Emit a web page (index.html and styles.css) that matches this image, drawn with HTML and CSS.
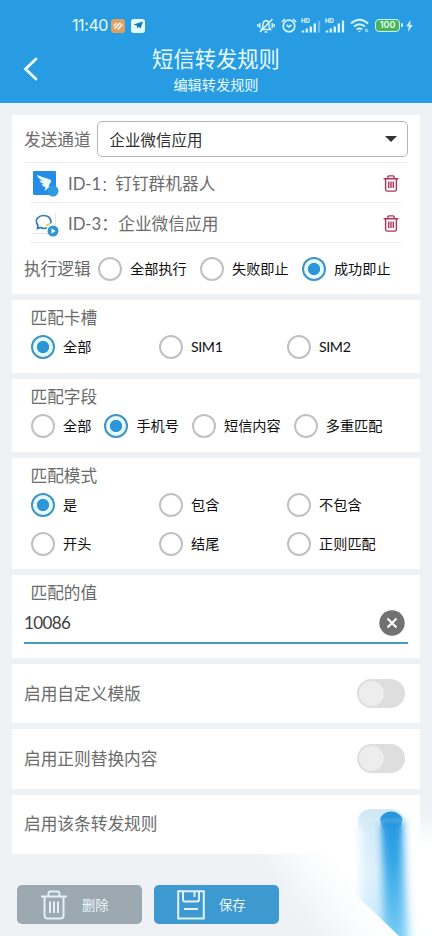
FILE: index.html
```html
<!DOCTYPE html>
<html lang="zh-CN">
<head>
<meta charset="utf-8">
<title>短信转发规则</title>
<link rel="stylesheet" href="styles.css">
</head>
<body>
<svg class="defs" width="0" height="0">
  <symbol id="trash" viewBox="0 0 28 30">
    <path d="M1 6.500H27M8.500 6V3.500Q8.500 1.500 10.500 1.500H17.500Q19.500 1.500 19.500 3.500V6M4.500 7V25.500Q4.500 28.500 7.500 28.500H20.500Q23.500 28.500 23.500 25.500V7M10 11.500V23M14 11.500V23M18 11.500V23"/>
  </symbol>
  <symbol id="signal" viewBox="0 0 20 15">
    <path d="M2 14.500v-2M5.800 14.500v-4M9.800 14.500v-6M13.800 14.500v-9" fill="none" stroke="#d5f4fc" stroke-width="2.400"/>
  </symbol>
</svg>
<main class="screen">
  <header class="top">
    <div class="status">
      <span class="clock">11:40</span>
      <svg class="app" width="14" height="14" viewBox="0 0 14 14"><rect width="14" height="14" rx="3" fill="#dfa064"/><path d="M2.500 7L5.500 4M3.500 9.500L8.500 4.500Q9.500 4 9.500 5.500M6.500 10.500L11.500 5.500" fill="none" stroke="#fff5e6" stroke-width="1.700"/></svg>
      <svg class="app" width="14" height="14" viewBox="0 0 14 14"><rect width="14" height="14" rx="3" fill="#e2fbff"/><path d="M2.500 5.500L12 2.500 9.500 9.500 7.500 7.800 6 9.500V6.800Z" fill="#1878b4"/></svg>
      <span class="grow"></span>
      <svg class="bell" width="18" height="16" viewBox="0 0 18 16" fill="none" stroke="#d5f4fc" stroke-width="1.500"><path d="M4.500 11.500Q6 10 6 6.500Q6 3 9 2.500Q12 3 12 6.500Q12 10 13.500 11.500ZM7.500 14h3M3 14L15.500 1M2.800 5v5M.8 6v3M15.200 5v5M17.200 6v3"/></svg>
      <svg class="alarm" width="16" height="15" viewBox="0 0 16 15" fill="none" stroke="#d5f4fc" stroke-width="1.700"><circle cx="8" cy="8" r="5.800"/><path d="M.8 4L4 1M15.200 4L12 1M5.500 7l2.500 2 2.500-2"/></svg>
      <span class="cell"><b>HD</b><svg width="20" height="15"><use href="#signal"/><path d="M18 14.500V2.500" stroke="#6cbcf0" stroke-width="2.200"/></svg></span>
      <span class="cell second"><b>HD</b><svg width="20" height="15"><use href="#signal"/><path d="M18 14.500V2.500" stroke="#d5f4fc" stroke-width="2.200"/></svg></span>
      <svg class="wifi" width="19" height="15" viewBox="0 0 19 15" fill="none" stroke="#d5f4fc" stroke-width="2"><path d="M1 5.500Q9.500-2 18 5.500M4 8.500Q9.500 4 15 8.500M6.800 11.500Q9.500 9.500 12.200 11.500M9.500 13v1"/><circle cx="16.500" cy="12.500" r="1.200" stroke-width="1"/></svg>
      <span class="battery">100</span>
      <svg class="bolt" width="7" height="12" viewBox="0 0 7 12"><path d="M4.500 0L.3 6.300H2.800L2 12 6.700 5H4.200Z" fill="#d5f4fc"/></svg>
    </div>
    <div class="bar">
      <svg class="back" width="16" height="24" viewBox="0 0 16 24"><path d="M13 2L2.500 12 13 22" fill="none" stroke="#edfcff" stroke-width="2.800" stroke-linecap="round"/></svg>
      <div class="titles"><h1>短信转发规则</h1><p>编辑转发规则</p></div>
    </div>
  </header>

  <div class="cards">
    <section class="card senders">
      <div class="channel"><span class="label">发送通道</span>
        <div class="select"><span>企业微信应用</span><svg width="12" height="6"><path d="M0 0H12L6 6Z" fill="#333"/></svg></div>
      </div>
      <div class="sender">
        <svg width="26" height="26" viewBox="0 0 26 26"><rect width="23" height="24" rx="1" fill="#258de8"/><path d="M4 4Q10 6.500 17 8.500Q19 9.500 17.500 11.500L15.500 15 17 15.500 11.500 20 12.500 16Q9.500 15.500 8.500 13.500L11 13Q7 11.500 6.500 9.500L10 10Q5 7.500 4 4Z" fill="#edffff"/><circle cx="20" cy="20" r="5.500" fill="#329be0"/></svg>
        <span class="name">ID-1<i>：</i>钉钉群机器人</span><svg class="del" width="16" height="17"><use href="#trash"/></svg>
      </div>
      <div class="sender">
        <svg width="26" height="26" viewBox="0 0 26 26"><path d="M22.500 2V22.500H0" fill="none" stroke="#e4e6e8"/><path d="M14 17Q10 18 7.500 16.500L4.500 17.500 5 14.500C.500 8 6.500 4.500 10.500 4.500C16 4.500 19 8.500 17.500 12.500" fill="none" stroke="#327fae" stroke-width="1.700"/><path d="M13 14.500l4-1.500" stroke="#d5df62" stroke-width="2"/><circle cx="20" cy="20" r="5.500" fill="#3494ca"/><path d="M18.500 17.300v5.400l4-2.700Z" fill="#e8ffff"/></svg>
        <span class="name id3">ID-3<i>：</i>企业微信应用</span><svg class="del" width="16" height="17"><use href="#trash"/></svg>
      </div>
      <div class="logic"><span class="label">执行逻辑</span>
        <div class="options">
          <span class="opt">全部执行</span><span class="opt">失败即止</span><span class="opt on">成功即止</span>
        </div>
      </div>
    </section>

    <section class="card sim"><h2>匹配卡槽</h2>
      <div class="thirds"><span class="opt on">全部</span><span class="opt latin">SIM1</span><span class="opt latin">SIM2</span></div>
    </section>
    <section class="card field"><h2>匹配字段</h2>
      <div class="options"><span class="opt">全部</span><span class="opt on">手机号</span><span class="opt">短信内容</span><span class="opt">多重匹配</span></div>
    </section>
    <section class="card mode"><h2>匹配模式</h2>
      <div class="thirds"><span class="opt on">是</span><span class="opt">包含</span><span class="opt">不包含</span><span class="opt">开头</span><span class="opt">结尾</span><span class="opt">正则匹配</span></div>
    </section>
    <section class="card value"><h2>匹配的值</h2>
      <div class="input"><span>10086</span><svg width="26" height="26"><circle cx="13" cy="13" r="12.700" fill="#727272"/><path d="M8.500 8.500l9 9M17.500 8.500l-9 9" stroke="#fff" stroke-width="2.100"/></svg></div>
    </section>
    <section class="card toggle"><span class="label">启用自定义模版</span><span class="switch"></span></section>
    <section class="card toggle"><span class="label">启用正则替换内容</span><span class="switch"></span></section>
    <section class="card toggle"><span class="label">启用该条转发规则</span></section>
  </div>

  <svg class="glow" width="172" height="146" viewBox="260 790 172 146">
    <defs>
      <linearGradient id="fog" gradientUnits="userSpaceOnUse" x1="285" y1="900" x2="340" y2="860"><stop offset="0" stop-color="#fff" stop-opacity="0"/><stop offset=".6" stop-color="#fff" stop-opacity=".7"/><stop offset="1" stop-color="#fff"/></linearGradient>
      <linearGradient id="pale" gradientUnits="userSpaceOnUse" x1="0" y1="810" x2="0" y2="936"><stop offset="0" stop-color="#cfe8f7"/><stop offset=".5" stop-color="#e0f2fc"/><stop offset="1" stop-color="#c5eafb"/></linearGradient>
      <linearGradient id="beam" gradientUnits="userSpaceOnUse" x1="0" y1="815" x2="0" y2="936"><stop offset="0" stop-color="#2398df"/><stop offset=".35" stop-color="#33a5e7"/><stop offset="1" stop-color="#75cbf5"/></linearGradient>
      <linearGradient id="core" gradientUnits="userSpaceOnUse" x1="0" y1="822" x2="0" y2="880"><stop offset="0" stop-color="#2598df" stop-opacity=".8"/><stop offset="1" stop-color="#3aaae9" stop-opacity="0"/></linearGradient>
      <linearGradient id="side" x1="0" y1="0" x2="0" y2="1"><stop offset="0" stop-color="#fff" stop-opacity="0"/><stop offset="1" stop-color="#fff"/></linearGradient>
      <linearGradient id="fade" gradientUnits="userSpaceOnUse" x1="0" y1="817" x2="0" y2="830"><stop offset="0" stop-color="#fff"/><stop offset="1" stop-color="#000"/></linearGradient>
      <mask id="sharp" maskUnits="userSpaceOnUse" x="340" y="800" width="92" height="60"><rect x="340" y="800" width="92" height="60" fill="url(#fade)"/></mask>
      <linearGradient id="rise" gradientUnits="userSpaceOnUse" x1="0" y1="814" x2="0" y2="824"><stop offset="0" stop-color="#000"/><stop offset="1" stop-color="#fff"/></linearGradient>
      <mask id="smear" maskUnits="userSpaceOnUse" x="340" y="800" width="92" height="136"><rect x="340" y="800" width="92" height="136" fill="url(#rise)"/></mask>
      <filter id="soft" x="-50%" y="-20%" width="200%" height="140%"><feGaussianBlur stdDeviation="4 1"/></filter>
      <filter id="tight" x="-50%" y="-20%" width="200%" height="140%"><feGaussianBlur stdDeviation="2 1"/></filter>
      <filter id="softer" x="-50%" y="-20%" width="200%" height="140%"><feGaussianBlur stdDeviation="5 2"/></filter>
      <clipPath id="cut"><path d="M340 812H432V936H399L357 896L340 879Z"/></clipPath>
    </defs>
    <path d="M260 853H420V845H432V936H260Z" fill="url(#fog)"/>
    <rect x="420" y="812" width="12" height="33" fill="url(#side)"/>
    <g clip-path="url(#cut)"><g mask="url(#smear)">
      <path d="M361 800H402L412 960H361Z" fill="url(#pale)" filter="url(#softer)"/>
      <path d="M382 800H401L406 960H384Z" fill="url(#beam)" filter="url(#soft)"/>
      <path d="M382 815H401L396 890H387Z" fill="url(#core)" filter="url(#tight)"/>
    </g></g>
    <g mask="url(#sharp)">
      <path d="M358 846V823Q358 809 372 809H390Q401 809 404 819L405 846Z" fill="#d1e9f7"/>
      <path d="M382 846V829L380 819Q383 811.500 391 811.500Q399 811.500 402.500 819L401 829V846Z" fill="#2796dc"/>
    </g>
  </svg>

  <footer class="actions">
    <span class="btn remove"><svg width="28" height="30"><use href="#trash"/></svg>删除</span>
    <span class="btn save"><svg width="28" height="30" viewBox="0 0 28 30"><path d="M1.200 1.200H26.800V28.500H1.200ZM6 1.500V9.500Q6 11.500 8 11.500H20Q22 11.500 22 9.500V1.500M17.500 2V7M7 19H21"/></svg>保存</span>
  </footer>
</main>
</body>
</html>
```
FILE: styles.css
```css
*, *::before { box-sizing: border-box; }
body { margin: 0; font-family: Lato, "Noto Sans CJK SC", sans-serif; }
.defs { display: none; }
.screen { width: 432px; height: 936px; overflow: hidden; position: relative; background: #eef2f5; }
.top { height: 103px; background: #289ce3; color: #e9fbff; }
.status { height: 45px; padding: 10px 19px 0 72px; display: flex; align-items: center; line-height: 20px; }
.clock { width: 36px; font: 400 16px/20px Inter, sans-serif; letter-spacing: -.4px; margin-right: 3px; white-space: nowrap; margin-top: -5px; }
.status svg, .status .battery, .status .cell { margin-top: -4px; flex: none; }
.app { margin-right: 6px; }
.grow { flex: 1; }
.bell { margin-right: 6px; }
.alarm { margin-right: 4px; }
.cell { position: relative; width: 20px; height: 15px; margin-right: 4px; }
.cell.second { margin-right: 5px; }
.status .cell svg { display: block; margin: 0; }
.cell b { position: absolute; left: 0; top: -1px; font: 700 6px/7px Inter, sans-serif; }
.wifi { margin-right: 6px; }
.battery { width: 25px; height: 13px; border: 1.5px solid #c8f2ef; border-radius: 4px; background: #49b45d; color: #e5ffed; font: 600 9px/10px Inter, sans-serif; text-align: center; margin-right: 6px; position: relative; }
.battery::before { content: ""; position: absolute; right: -4px; top: 3px; width: 2px; height: 4px; background: #c8f2ef; border-radius: 1px; }
.bar { display: flex; position: relative; justify-content: center; height: 58px; }
.back { position: absolute; left: 23px; top: 12px; }
.titles { text-align: center; }
h1 { font-weight: 400; font-size: 21.3px; line-height: 28px; margin: 0; }
.titles p { font-size: 14.2px; line-height: 20px; margin: 2px 0 0; }

.cards { padding: 12px 12px 0; display: flex; flex-direction: column; gap: 6px; }
.card { background: #fff; color: #6b6b6b; }
.label, h2 { font-size: 16.7px; line-height: 20px; font-weight: 400; margin: 0; white-space: nowrap; color: #6b6b6b; }
h2 { padding-left: 18.5px; height: 32px; padding-top: 7.5px; }
.senders { height: 179px; padding: 6px 12px 0; }
.channel { height: 42px; display: flex; align-items: flex-start; border-bottom: 1px solid #ededed; margin-right: 1px; }
.channel .label { width: 73px; padding-top: 9px; flex: none; }
.select { width: 311px; flex: none; height: 36px; border: 1px solid #b5b5b5; border-radius: 5px; display: flex; align-items: center; justify-content: space-between; padding: 0 10px 0 11.5px; font-size: 15.5px; color: #303030; }
.sender { margin: 0 6px; height: 40px; border-bottom: 1px solid #ededed; display: flex; align-items: center; padding: 3px 3px 0 3px; }
.name { flex: 1; margin-left: 9px; font-size: 16.7px; line-height: 24px; }
.name i { font-style: normal; font-size: 14px; display: inline-block; width: 14px; }
.id3 i { width: 17px; font-size: 16.7px; }
.del { fill: none; stroke: #b03456; stroke-width: 2.5; margin-bottom: 2px; }
.logic { display: flex; align-items: center; height: 51px; }
.logic .label { width: 74px; flex: none; }
.options { display: flex; gap: 13.2px; }
.opt { display: flex; align-items: center; gap: 8px; height: 24px; font-size: 14.2px; line-height: 20px; color: #101010; white-space: nowrap; }
.opt::before { content: ""; flex: none; width: 24px; height: 24px; border: 2px solid #c1c1c3; border-radius: 50%; }
.opt.on::before { border-color: #4193c1; background: radial-gradient(circle, #2e96d7 0 5.7px, #e5faff 6.5px 8px, #e5faff); }
.latin { letter-spacing: -.4px; }
.sim, .field { height: 73px; }
.field .options { padding: 3px 0 0 19px; gap: 13px; }
.thirds { display: grid; grid-template-columns: repeat(3, 128px); row-gap: 14.5px; padding: 3px 0 0 19px; }
.mode { height: 111px; }
.value { height: 83px; padding: 0 12px; }
.value h2 { padding-left: 6.5px; height: 33px; }
.input { height: 36px; border-bottom: 2px solid #499ac1; display: flex; align-items: center; justify-content: space-between; padding: 0 3px 7px 0; font-size: 17px; color: #404040; letter-spacing: -.6px; }
.input svg { position: relative; top: 1px; }
.input span { position: relative; top: 1px; }
.toggle { height: 59.33px; padding: 0 15px 0 12px; display: flex; align-items: center; justify-content: space-between; }
.switch { width: 48px; height: 29px; border-radius: 15px; background: #dedede; padding: 2px; }
.switch::before { content: ""; display: block; width: 25px; height: 25px; border-radius: 50%; background: #ededed; }
.actions { display: flex; gap: 12px; padding: 31.5px 0 0 17px; position: relative; }
.btn { width: 125px; height: 39px; border-radius: 5px; display: flex; align-items: center; padding-left: 23px; gap: 14px; color: #e8f7fc; font-size: 13.3px; }
.btn svg { fill: none; stroke: #e1f1f8; stroke-width: 2; }
.remove { background: #9da9b1; }
.save { background: #3e99d0; }
.glow { position: absolute; left: 260px; top: 790px; }
```
